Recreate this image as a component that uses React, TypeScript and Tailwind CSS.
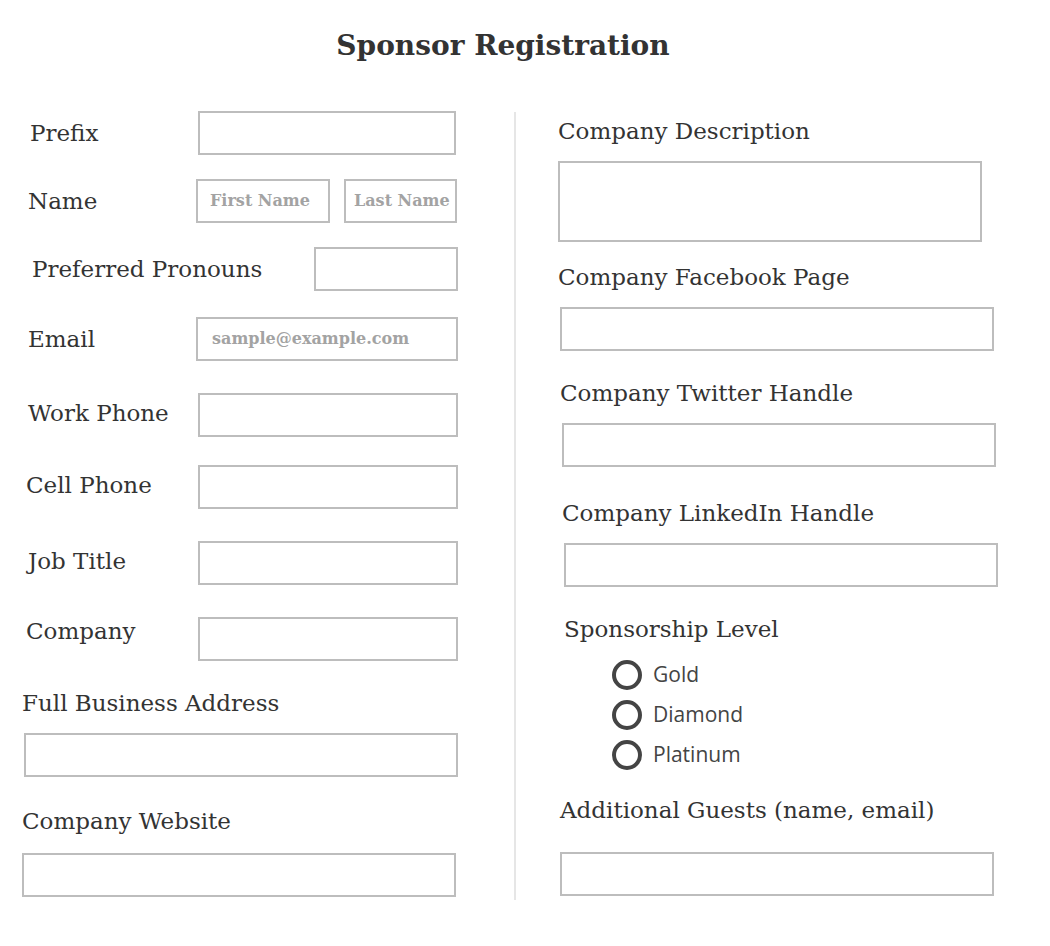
import React from "react";

const serif = { fontFamily: '"DejaVu Serif", "Liberation Serif", serif' };

function Box({ w, h = 44, ml = 0, mt = 0, placeholder, pl = 12 }: { w: number; h?: number; ml?: number; mt?: number; placeholder?: string; pl?: number }) {
  return (
    <div
      className="box-border border-2 border-[#bdbdbd] bg-white flex items-center shrink-0 overflow-hidden"
      style={{ width: w, height: h, marginLeft: ml, marginTop: mt }}
    >
      {placeholder ? (
        <span className="text-[16px] font-bold text-[#a3a3a3] whitespace-nowrap" style={{ ...serif, paddingLeft: pl }}>
          {placeholder}
        </span>
      ) : null}
    </div>
  );
}

function Label({ children, ml = 0, mt = 0 }: { children: React.ReactNode; ml?: number; mt?: number }) {
  return (
    <div className="text-[23px] leading-[28px] text-[#333] whitespace-nowrap" style={{ ...serif, marginLeft: ml, marginTop: mt }}>
      {children}
    </div>
  );
}

function Radio({ label }: { label: string }) {
  return (
    <div className="flex items-center h-[40px]">
      <div className="box-border w-[30px] h-[30px] rounded-full border-[4px] border-[#444] ml-[96px]" />
      <span className="ml-[11px] text-[21px] text-[#444]" style={{ fontFamily: '"Open Sans", "Noto Sans", sans-serif' }}>
        {label}
      </span>
    </div>
  );
}

export default function App() {
  return (
    <div className="w-[1050px] h-[946px] bg-white text-[#333]" style={serif}>
      <div className="h-[92px] flex items-center justify-center pr-[44px]">
        <h1 className="text-[28px] font-bold text-[#333]" style={serif}>Sponsor Registration</h1>
      </div>
      <div className="flex">
        {/* Left column */}
        <div className="w-[514px] flex flex-col">
          <div className="flex items-center h-[44px] mt-[19px]">
            <div className="w-[198px]"><Label ml={30}>Prefix</Label></div>
            <Box w={258} />
          </div>
          <div className="flex items-center h-[44px] mt-[24px]">
            <div className="w-[196px]"><Label ml={28}>Name</Label></div>
            <Box w={134} placeholder="First Name" />
            <Box w={113} ml={14} placeholder="Last Name" pl={8} />
          </div>
          <div className="flex items-center h-[44px] mt-[24px]">
            <div className="w-[314px]"><Label ml={32}>Preferred Pronouns</Label></div>
            <Box w={144} />
          </div>
          <div className="flex items-center h-[44px] mt-[26px]">
            <div className="w-[196px]"><Label ml={28}>Email</Label></div>
            <Box w={262} placeholder="sample@example.com" pl={14} />
          </div>
          <div className="flex items-center h-[44px] mt-[32px]">
            <div className="w-[198px] mb-[4px]"><Label ml={28}>Work Phone</Label></div>
            <Box w={260} />
          </div>
          <div className="flex items-center h-[44px] mt-[28px]">
            <div className="w-[198px] mb-[4px]"><Label ml={26}>Cell Phone</Label></div>
            <Box w={260} />
          </div>
          <div className="flex items-center h-[44px] mt-[32px]">
            <div className="w-[198px] mb-[4px]"><Label ml={28}>Job Title</Label></div>
            <Box w={260} />
          </div>
          <div className="flex items-center h-[44px] mt-[32px]">
            <div className="w-[198px] mb-[16px]"><Label ml={26}>Company</Label></div>
            <Box w={260} />
          </div>
          <Label ml={22} mt={28}>Full Business Address</Label>
          <Box w={434} ml={24} mt={16} />
          <Label ml={22} mt={30}>Company Website</Label>
          <Box w={434} ml={22} mt={18} />
        </div>
        {/* Divider */}
        <div className="w-[2px] h-[788px] mt-[20px] bg-[#e6e6e6] shrink-0" />
        {/* Right column */}
        <div className="flex-1 flex flex-col">
          <Label ml={42} mt={25}>Company Description</Label>
          <Box w={424} h={81} ml={42} mt={16} />
          <Label ml={42} mt={21}>Company Facebook Page</Label>
          <Box w={434} ml={44} mt={16} />
          <Label ml={44} mt={28}>Company Twitter Handle</Label>
          <Box w={434} ml={46} mt={16} />
          <Label ml={46} mt={32}>Company LinkedIn Handle</Label>
          <Box w={434} ml={48} mt={16} />
          <Label ml={48} mt={28}>Sponsorship Level</Label>
          <div className="flex flex-col mt-[12px]">
            <Radio label="Gold" />
            <Radio label="Diamond" />
            <Radio label="Platinum" />
          </div>
          <Label ml={44} mt={21}>Additional Guests (name, email)</Label>
          <Box w={434} ml={44} mt={28} />
        </div>
      </div>
    </div>
  );
}
